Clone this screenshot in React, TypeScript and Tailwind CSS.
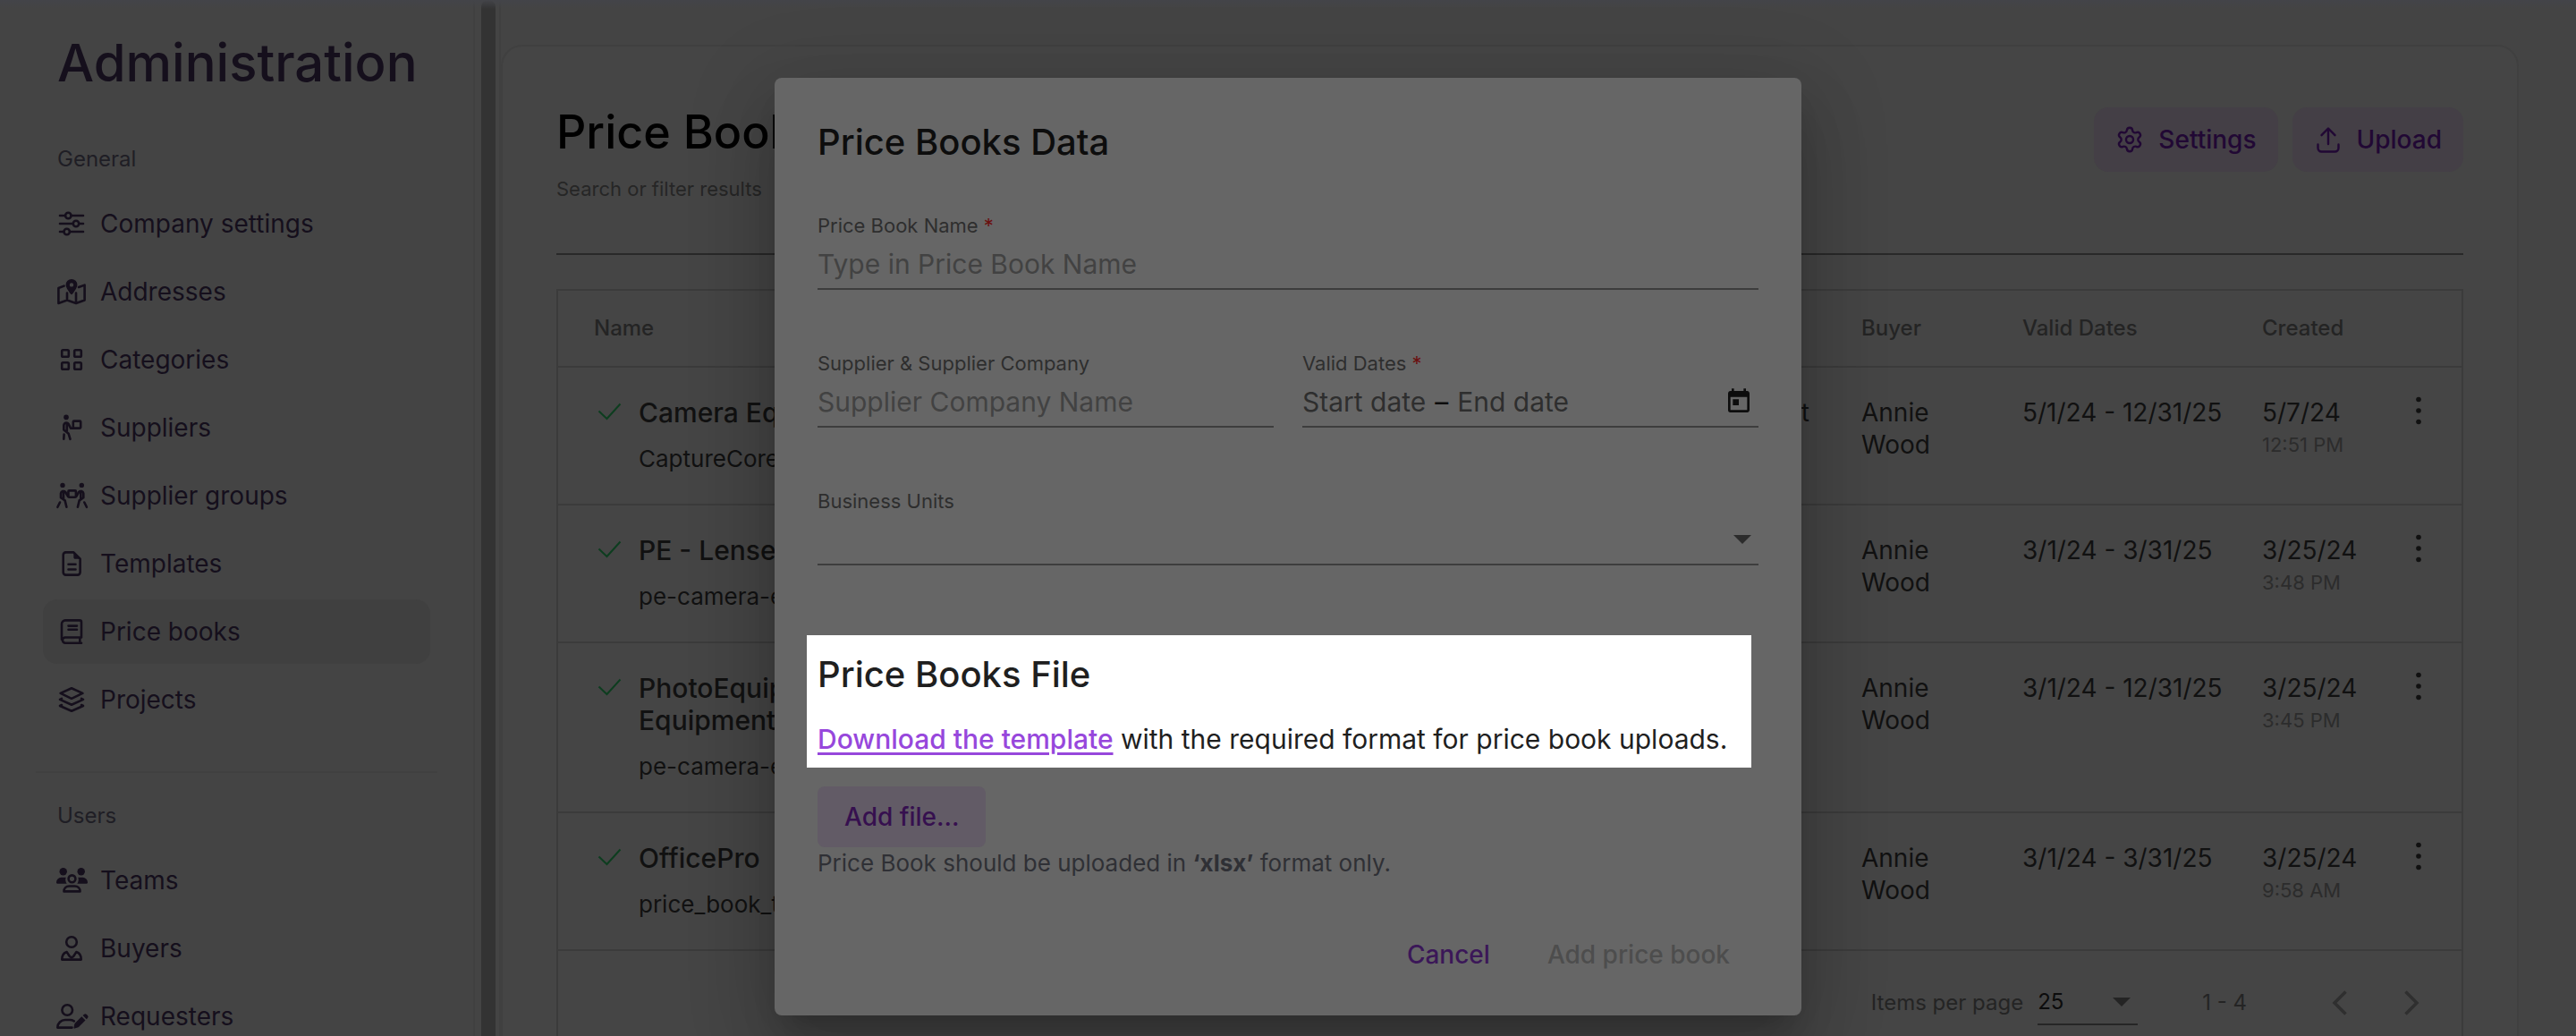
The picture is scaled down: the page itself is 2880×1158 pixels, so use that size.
import type { ReactNode } from "react";
import { Settings } from "lucide-react";
import { MdToday } from "react-icons/md";

function NavIcon({ children }: { children: ReactNode }) {
  return (
    <svg
      viewBox="0 0 32 32"
      className="size-8 shrink-0 overflow-visible"
      fill="none"
      stroke="currentColor"
      strokeWidth="2.6"
      strokeLinecap="round"
      strokeLinejoin="round"
      aria-hidden="true"
    >
      {children}
    </svg>
  );
}

const SlidersIcon = (
  <NavIcon>
    <path d="M3 7h5.8M15.8 7H29M3 16h14.5M24.5 16H29M3 25h4.2M14.2 25H29" />
    <circle cx="12.3" cy="7" r="3.2" />
    <circle cx="21" cy="16" r="3.2" />
    <circle cx="10.7" cy="25" r="3.2" />
  </NavIcon>
);

const MapIcon = (
  <NavIcon>
    <path d="M7.6 9.6 1.4 12v17L11 25.6l10 3.4 9.6-3.4V8.6L24 11M11 17.5v8M21 17.5V29" />
    <path
      d="M16 2a6.4 6.4 0 0 0-6.4 6.4c0 3 3.8 8 5.6 10.4.4.5 1.2.5 1.6 0 1.8-2.4 5.6-7.4 5.6-10.4A6.4 6.4 0 0 0 16 2Zm0 8.6a2.2 2.2 0 1 1 0-4.4 2.2 2.2 0 0 1 0 4.4Z"
      fill="currentColor"
      fillRule="evenodd"
      stroke="none"
    />
  </NavIcon>
);

const GridIcon = (
  <NavIcon>
    <rect x="5.2" y="5.2" width="7.6" height="7.6" rx="1.3" />
    <rect x="19.2" y="5.2" width="7.6" height="7.6" rx="1.3" />
    <rect x="5.2" y="19.2" width="7.6" height="7.6" rx="1.3" />
    <rect x="19.2" y="19.2" width="7.6" height="7.6" rx="1.3" />
  </NavIcon>
);

const CarryIcon = (
  <NavIcon>
    <circle cx="10" cy="4.4" r="2.8" fill="currentColor" stroke="none" />
    <path d="M7.3 18.5v-5a3 3 0 0 1 3-3c1.2 0 1.8.6 2.3 1.5l2.6 4.8h3M7.3 18.5l3.6 2.7 1.8 1.6 1.8 6M10.8 12v7.5M7.6 23.5l-.3 5.3" />
    <rect x="17.8" y="8.6" width="8.4" height="8" rx="1" />
  </NavIcon>
);

const CarryGroupIcon = (
  <NavIcon>
    <circle cx="6" cy="4.4" r="2.7" fill="currentColor" stroke="none" />
    <circle cx="27.3" cy="4.4" r="2.7" fill="currentColor" stroke="none" />
    <path d="M4 18.2v-4.7a3 3 0 0 1 5.2-1.5l2.6 4.6M4 18.2l4.6 3.2 1.8 7.4M7 12.5v7M3 23.5l-2.6 5.3" />
    <path d="M29.3 18.2v-4.7a3 3 0 0 0-5.2-1.5l-2.6 4.6M29.3 18.2l-4.6 3.2-1.8 7.4M26.3 12.5v7M30.3 23.5l2.6 5.3" />
    <rect x="12.4" y="10.4" width="8.5" height="7.4" rx="1" />
  </NavIcon>
);

const FileIcon = (
  <NavIcon>
    <path d="M9.5 3.4h8.8l7.3 7.3v15.1a2.8 2.8 0 0 1-2.8 2.8H9.5a2.8 2.8 0 0 1-2.8-2.8V6.2a2.8 2.8 0 0 1 2.8-2.8ZM12.5 16.8h8M12.5 22.5h8" />
    <path d="M18.3 3.4v5.5c0 1 .8 1.8 1.8 1.8h5.5Z" fill="currentColor" stroke="none" />
  </NavIcon>
);

const BookIcon = (
  <NavIcon>
    <path d="M27 22.5V5.4a2 2 0 0 0-2-2H9a4 4 0 0 0-4 4v17.4M9 22.5h18M9 28.7h18M9 22.5a3.1 3.1 0 0 0 0 6.2M25.3 22.5v6.2M12.5 9.6H22M12.5 13.8H22" />
  </NavIcon>
);

const LayersIcon = (
  <NavIcon>
    <path d="m16 3.3 12.4 5.6L16 14.8 3.6 8.9ZM5 14.9l-2 1 13 5.8 13-5.8-2-1M5 22l-2 1 13 5.7L29 23l-2-1" />
  </NavIcon>
);

const TeamsIcon = (
  <NavIcon>
    <circle cx="6.7" cy="6.2" r="4.2" fill="currentColor" stroke="none" />
    <circle cx="26.7" cy="6.2" r="4.2" fill="currentColor" stroke="none" />
    <path
      d="M4.5 12.7h5.2c-.9 2.3-.5 5 1 7H.1c-.7 0-1.1-.5-1.1-1.1a5.8 5.8 0 0 1 5.5-5.9ZM28.5 12.7h-5.2c.9 2.3.5 5-1 7h10.6c.7 0 1.1-.5 1.1-1.1a5.8 5.8 0 0 0-5.5-5.9Z"
      fill="currentColor"
      stroke="none"
    />
    <circle cx="16.5" cy="14.3" r="3.9" />
    <path d="M7.5 28.4c0-3.4 2.4-5.9 5.8-5.9h6.4c3.4 0 5.8 2.5 5.8 5.9Z" />
  </NavIcon>
);

const BuyerIcon = (
  <NavIcon>
    <circle cx="16" cy="9" r="5.8" />
    <path d="M5.3 28.6c0-4.5 2.2-7.6 5.4-8.5l3 4.7c1.1 1.6 3.5 1.6 4.6 0l3-4.7c3.2.9 5.4 4 5.4 8.5Z" />
  </NavIcon>
);

const RequesterIcon = (
  <NavIcon>
    <circle cx="11.2" cy="9" r="5.8" />
    <path d="M18.8 21.3a9 9 0 0 0-4.8-1.3H9a8.6 8.6 0 0 0-8.7 8.6h16.2" />
    <path
      d="m20 23.6 7.3-7.3 4.2 4.2-7.3 7.3c-.4.4-.9.7-1.4.8l-3.4 1c-.6.2-1-.3-.9-.9l.7-3.6c.1-.6.4-1.1.8-1.5ZM28.6 15l1.2-1.1a2.2 2.2 0 0 1 3.1 0l1 1a2.2 2.2 0 0 1 0 3.1l-1.1 1.2Z"
      fill="currentColor"
      stroke="none"
    />
  </NavIcon>
);

const GENERAL = [
  { label: "Company settings", icon: SlidersIcon },
  { label: "Addresses", icon: MapIcon },
  { label: "Categories", icon: GridIcon },
  { label: "Suppliers", icon: CarryIcon },
  { label: "Supplier groups", icon: CarryGroupIcon },
  { label: "Templates", icon: FileIcon },
  { label: "Price books", icon: BookIcon, active: true },
  { label: "Projects", icon: LayersIcon },
];

const USERS = [
  { label: "Teams", icon: TeamsIcon },
  { label: "Buyers", icon: BuyerIcon },
  { label: "Requesters", icon: RequesterIcon },
];

type NavEntry = { label: string; icon: ReactNode; active?: boolean };

function NavGroup({ title, items }: { title: string; items: NavEntry[] }) {
  return (
    <section className="px-2">
      <h2 className="px-4 text-[24px] leading-9 text-[#1f1e25]">{title}</h2>
      <ul className="mt-[18px] flex flex-col gap-1">
        {items.map((item) => (
          <li key={item.label}>
            <a
              href="#"
              aria-current={item.active ? "page" : undefined}
              className={
                item.active
                  ? "flex h-[72px] items-center gap-4 rounded-2xl bg-[#404040] px-4"
                  : "flex h-[72px] items-center gap-4 rounded-2xl px-4"
              }
            >
              {item.icon}
              <span>{item.label}</span>
            </a>
          </li>
        ))}
      </ul>
    </section>
  );
}

function Sidebar() {
  return (
    <nav className="w-[531px] shrink-0 border-r-2 border-[#404040] px-10 pt-[34px] text-[28px] text-[#150f1c]">
      <h1 className="px-6 text-[58px] leading-[72px] font-medium">Administration</h1>
      <div className="mt-[54px]">
        <NavGroup title="General" items={GENERAL} />
      </div>
      <hr className="mt-11 border-t-2 border-[#404040]" />
      <div className="mt-[30px]">
        <NavGroup title="Users" items={USERS} />
      </div>
    </nav>
  );
}

const ROWS = [
  { name: "Camera Equipment", file: "CaptureCore", unit: "Equipment", dates: "5/1/24 - 12/31/25", day: "5/7/24", time: "12:51 PM" },
  { name: "PE - Lenses", file: "pe-camera-eq", unit: "", dates: "3/1/24 - 3/31/25", day: "3/25/24", time: "3:48 PM" },
  { name: "PhotoEquipment Equipment", file: "pe-camera-eq", unit: "", dates: "3/1/24 - 12/31/25", day: "3/25/24", time: "3:45 PM" },
  { name: "OfficePro", file: "price_book_te", unit: "", dates: "3/1/24 - 3/31/25", day: "3/25/24", time: "9:58 AM" },
];

function PriceBookTable() {
  return (
    <table className="w-full table-fixed border-collapse text-left text-[28px] leading-9 text-[#111]">
      <colgroup>
        <col className="w-[400px]" />
        <col />
        <col className="w-[180px]" />
        <col className="w-[268px]" />
        <col className="w-[127px]" />
        <col className="w-24" />
      </colgroup>
      <thead>
        <tr className="h-[85px] border-b-2 border-[#3b3b3b] text-[24px] text-[#242424]">
          <th className="pl-10 font-medium">Name</th>
          <td />
          <th className="font-medium">Buyer</th>
          <th className="font-medium">Valid Dates</th>
          <th className="font-medium">Created</th>
          <td />
        </tr>
      </thead>
      <tbody>
        {ROWS.map((row) => (
          <tr key={row.name} className="border-b-2 border-[#3b3b3b] align-top">
            <td className="py-8 pl-10">
              <div className="flex">
                <svg viewBox="0 0 50 36" className="h-9 w-[50px] shrink-0" fill="none" stroke="#0d3d1f" strokeWidth="2" aria-hidden="true">
                  <path d="m5.5 16.5 9 8.500 15-16.500" />
                </svg>
                <div>
                  <div className="text-[30px] leading-9 font-medium">{row.name}</div>
                  <div className="mt-4 text-[26px] leading-9 whitespace-nowrap">{row.file}</div>
                </div>
              </div>
            </td>
            <td className="py-8 pr-[58px] text-right">{row.unit}</td>
            <td className="py-8 pr-10">Annie Wood</td>
            <td className="py-8 whitespace-nowrap">{row.dates}</td>
            <td className="py-8 whitespace-nowrap">
              {row.day}
              <div className="text-[22px] leading-9 text-[#2c2c2c]">{row.time}</div>
            </td>
            <td className="py-7 text-center">
              <button type="button" aria-label="Row actions" className="inline-flex size-10 items-center justify-center">
                <svg viewBox="0 0 8 32" className="h-8 w-2" fill="currentColor" aria-hidden="true">
                  <circle cx="4" cy="3.5" r="2.8" />
                  <circle cx="4" cy="16" r="2.8" />
                  <circle cx="4" cy="28.5" r="2.8" />
                </svg>
              </button>
            </td>
          </tr>
        ))}
      </tbody>
    </table>
  );
}

function Caret() {
  return (
    <svg viewBox="0 0 20 10" className="pointer-events-none absolute right-2 h-[10px] w-5" fill="currentColor" aria-hidden="true">
      <path d="M0 0h20L10 10Z" />
    </svg>
  );
}

function Pagination() {
  return (
    <div className="flex h-[116px] items-center justify-end pr-8 text-[24px] text-[#242424]">
      <label htmlFor="page-size">Items per page</label>
      <div className="relative ml-4 flex h-[50px] w-28 items-center border-b-2 border-[#262626]">
        <select id="page-size" defaultValue="25" className="h-full w-full appearance-none text-[#0c0c0c] outline-none">
          <option>25</option>
        </select>
        <Caret />
      </div>
      <span className="ml-[72px]">1 - 4</span>
      <button type="button" aria-label="Previous page" className="ml-20 flex size-12 items-center justify-center">
        <svg viewBox="0 0 18 28" className="h-7 w-[18px]" fill="none" stroke="#2f2f2f" strokeWidth="3.5" aria-hidden="true">
          <path d="M15.5 1.5 3 14l12.5 12.5" />
        </svg>
      </button>
      <button type="button" aria-label="Next page" className="ml-8 flex size-12 items-center justify-center">
        <svg viewBox="0 0 18 28" className="h-7 w-[18px]" fill="none" stroke="#2f2f2f" strokeWidth="3.5" aria-hidden="true">
          <path d="M2.5 1.5 15 14 2.5 26.5" />
        </svg>
      </button>
    </div>
  );
}

function PriceBooksPage() {
  return (
    <main className="min-w-0 flex-1 pt-[50px] pr-16">
      <div className="min-h-[1140px] rounded-t-[24px] border-2 border-[#404040] bg-[#454545] px-[60px] pt-[68px]">
        <header className="flex h-[72px] items-start justify-between">
          <h2 className="text-[52px] leading-[56px] font-medium text-black">Price Books</h2>
          <div className="flex gap-4 text-[28px] font-medium text-[#210834]">
            <button type="button" className="flex h-[72px] items-center gap-4 rounded-2xl bg-[#443f46] px-6">
              <Settings className="size-8" strokeWidth={1.8} aria-hidden="true" />
              Settings
            </button>
            <button type="button" className="flex h-[72px] items-center gap-4 rounded-2xl bg-[#443f46] px-6">
              <svg viewBox="0 0 32 32" className="size-8" fill="none" stroke="currentColor" strokeWidth="2.4" strokeLinecap="round" strokeLinejoin="round" aria-hidden="true">
                <path d="M16 21V4M8.5 11.2 16 3.5l7.5 7.7M4.500 21.500v4a4 4 0 0 0 4 4h15a4 4 0 0 0 4-4v-4" />
              </svg>
              Upload
            </button>
          </div>
        </header>
        <div className="flex flex-col">
          <label htmlFor="search" className="text-[22px] leading-[38px] text-[#262626]">
            Search or filter results
          </label>
          <input id="search" type="search" className="h-[55px] border-b-2 border-[#292929] text-[28px] outline-none" />
        </div>
        <div className="mt-[38px] border-2 border-[#3b3b3b]">
          <PriceBookTable />
          <Pagination />
        </div>
      </div>
    </main>
  );
}

const LABEL = "text-[22px] leading-8 text-[#2e2e2e]";
const BOX = "relative flex h-14 items-center border-b-2 border-[#3d3d3d]";

function PriceBookDialog() {
  return (
    <div className="absolute inset-0 flex items-start justify-center pt-[87px]">
      <div
        role="dialog"
        aria-modal="true"
        aria-labelledby="dialog-title"
        className="w-full max-w-[1148px] rounded-lg bg-[#666] px-12 pt-12 pb-8 text-[30px] text-[#0d0d0d] shadow-[0_22px_30px_-14px_rgba(0,0,0,0.2),0_48px_76px_6px_rgba(0,0,0,0.14),0_18px_92px_16px_rgba(0,0,0,0.12)]"
      >
        <h2 id="dialog-title" className="text-[40px] leading-[48px] font-medium">
          Price Books Data
        </h2>
        <form className="mt-[53px] flex flex-col gap-[66px]">
          <div>
            <label htmlFor="book-name" className={LABEL}>
              <span className="block">
                Price Book Name <span className="text-[#6b0f0f]">*</span>
              </span>
            </label>
            <div className={BOX}>
              <input id="book-name" placeholder="Type in Price Book Name" className="w-full outline-none placeholder:text-[#424242]" />
            </div>
          </div>
          <div className="grid grid-cols-2 gap-8">
            <div>
              <label htmlFor="supplier" className={LABEL}>
                <span className="block">Supplier &amp; Supplier Company</span>
              </label>
              <div className={BOX}>
                <input id="supplier" placeholder="Supplier Company Name" className="w-full outline-none placeholder:text-[#424242]" />
              </div>
            </div>
            <div>
              <label htmlFor="start-date" className={LABEL}>
                <span className="block">
                  Valid Dates <span className="text-[#6b0f0f]">*</span>
                </span>
              </label>
              <div className={BOX}>
                <input id="start-date" placeholder="Start date" className="field-sizing-content outline-none placeholder:text-[#2e2e2e]" />
                <span className="mx-2.5">–</span>
                <input aria-label="End date" placeholder="End date" className="field-sizing-content outline-none placeholder:text-[#2e2e2e]" />
                <button type="button" aria-label="Open calendar" className="ml-auto pr-1.5">
                  <MdToday className="size-8" aria-hidden="true" />
                </button>
              </div>
            </div>
          </div>
          <div>
            <label htmlFor="business-units" className={LABEL}>
              <span className="block">Business Units</span>
            </label>
            <div className={BOX}>
              <select id="business-units" defaultValue="" className="w-full appearance-none outline-none">
                <option value=""></option>
              </select>
              <span className="flex items-center text-[#2c2c2c]">
                <Caret />
              </span>
            </div>
          </div>
        </form>
        <section className="mt-[78px] mr-2 -ml-3 bg-white pt-5 pb-3 pl-3 text-[#1f1f1f]">
          <h2 className="text-[40px] leading-[48px] font-medium">Price Books File</h2>
          <p className="mt-7 leading-10">
            <a href="#" className="font-medium text-[#9747dc] underline decoration-[3px] underline-offset-4">
              Download the template
            </a>{" "}
            with the required format for price book uploads.
          </p>
        </section>
        <button type="button" className="mt-[21px] block h-[68px] rounded-lg bg-[#625b66] px-[30px] text-[28px] font-medium text-[#36104f]">
          Add file...
        </button>
        <p className="text-[26px] leading-9 text-[#2f3035]">
          Price Book should be uploaded in <b>‘xlsx’</b> format only.
        </p>
        <div className="mt-12 flex justify-end text-[28px] font-medium">
          <button type="button" className="h-[72px] px-8 text-[#3b1758]">
            Cancel
          </button>
          <button type="button" disabled className="h-[72px] px-8 text-[#4d4d4d]">
            Add price book
          </button>
        </div>
      </div>
    </div>
  );
}

export default function App() {
  return (
    <div className="relative flex h-screen overflow-hidden bg-[#444] font-['Inter',sans-serif]">
      <Sidebar />
      <div className="w-[29px] shrink-0 border-r-2 border-[#404040] pl-[7px]">
        <div className="h-full w-4 rounded-t-full bg-[#333]" />
      </div>
      <PriceBooksPage />
      <div className="absolute inset-x-0 top-0 h-2.5 bg-linear-to-b from-[#434449] to-[#444]/0" />
      <PriceBookDialog />
    </div>
  );
}
